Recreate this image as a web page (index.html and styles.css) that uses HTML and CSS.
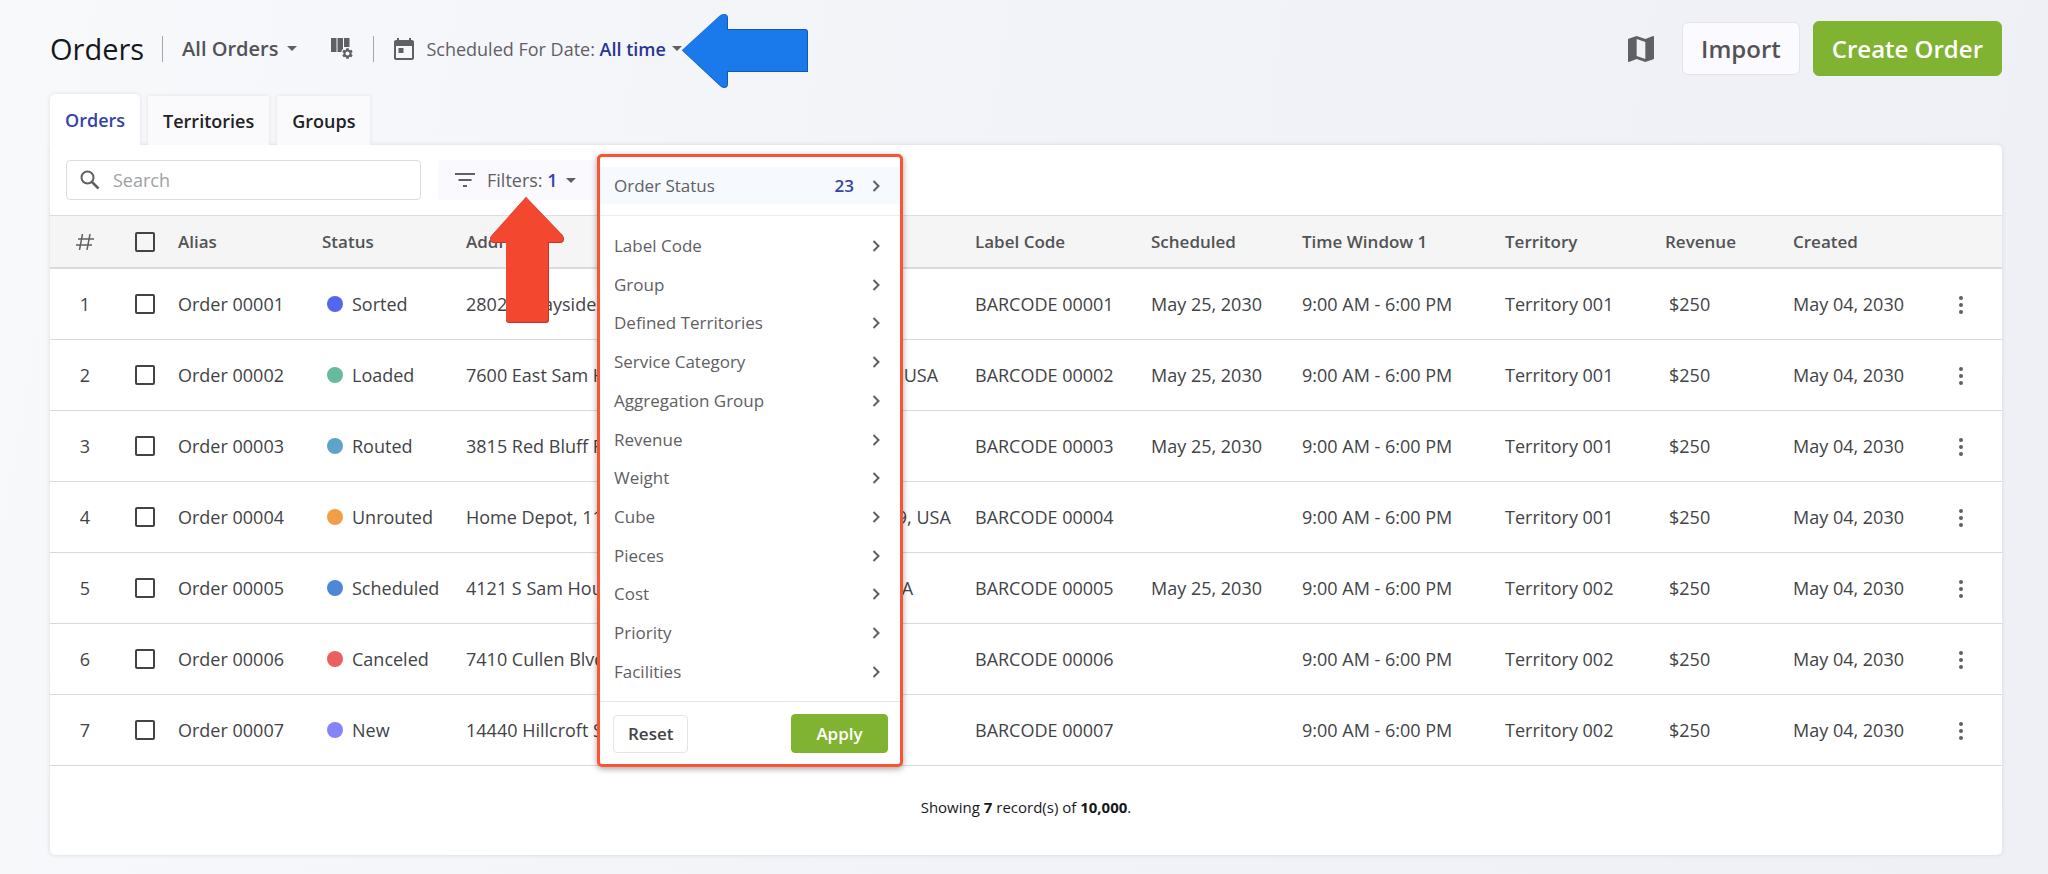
FILE: index.html
```
<!DOCTYPE html>
<html lang="en">
<head>
    <meta charset="UTF-8">
    <meta name="viewport" content="width=device-width, initial-scale=1.0">
    <title>Orders</title>
    <link rel="stylesheet" href="styles.css">
</head>
<body>
    <svg class="sprite" aria-hidden="true">
        <symbol id="chevron" viewBox="0 0 8 12"><path d="M1.5 1l5 5-5 5" fill="none" stroke="currentColor" stroke-width="2"/></symbol>
        <symbol id="caret" viewBox="0 0 10 5"><path d="M0 0h10L5 5z" fill="currentColor"/></symbol>
        <symbol id="dots" viewBox="0 0 4 18"><circle cx="2" cy="2" r="2"/><circle cx="2" cy="9" r="2"/><circle cx="2" cy="16" r="2"/></symbol>
    </svg>

    <header class="header">
        <h1>Orders</h1>
        <span class="divider"></span>
        <button class="view-btn">All Orders <svg class="caret"><use href="#caret"/></svg></button>
        <button class="columns-btn" aria-label="Configure columns">
            <svg width="22" height="21" viewBox="0 0 22 21" fill="#5f6063">
                <path d="M0 0h5.500v14H0zM6.500 0H12v11l-1.500 1.500V14h-4zM13 0h5.500v9H13z"/>
                <svg x="11" y="10" width="11" height="11" viewBox="2 2 20 20">
                    <path d="M19.140 12.940c.04-.3.06-.61.06-.94 0-.32-.02-.64-.07-.94l2.030-1.580c.18-.14.23-.41.12-.61l-1.920-3.320c-.12-.22-.37-.29-.59-.22l-2.390.96c-.5-.38-1.030-.7-1.620-.94l-.36-2.540c-.04-.24-.24-.41-.48-.41h-3.840c-.24 0-.43.17-.47.41l-.36 2.540c-.59.24-1.130.57-1.620.94l-2.390-.96c-.22-.08-.47 0-.59.22L2.740 8.870c-.12.21-.08.47.12.61l2.030 1.580c-.05.3-.09.63-.09.94s.02.64.07.94l-2.030 1.580c-.18.14-.23.41-.12.61l1.920 3.320c.12.22.37.29.59.22l2.390-.96c.5.38 1.030.7 1.620.94l.36 2.540c.05.24.24.41.48.41h3.840c.24 0 .44-.17.47-.41l.36-2.540c.59-.24 1.130-.56 1.620-.94l2.390.96c.22.08.47 0 .59-.22l1.920-3.320c.12-.22.07-.47-.12-.61l-2.010-1.580zM12 15.600c-1.980 0-3.600-1.620-3.600-3.600s1.620-3.600 3.600-3.600 3.600 1.620 3.600 3.600-1.620 3.600-3.600 3.600z"/>
                </svg>
            </svg>
        </button>
        <span class="divider"></span>
        <div class="date">
            <button class="date-btn">
                <svg width="20" height="22" viewBox="0 0 20 22">
                    <path d="M18 2h-1V0h-2v2H5V0H3v2H2C.9 2 0 2.900 0 4v16c0 1.100.9 2 2 2h16c1.100 0 2-.9 2-2V4c0-1.100-.9-2-2-2zm0 18H2V8h16zM4.500 10h5v5h-5z" fill="#5f6063" fill-rule="evenodd"/>
                </svg>
                <span>Scheduled For Date: <b>All time</b></span>
                <svg class="caret"><use href="#caret"/></svg>
            </button>
            <svg class="arrow arrow-blue" viewBox="0 0 126 74">
                <path d="M0 36.500L38 1.500Q40 0 42 0Q46 0 46 4V15H123Q126 15 126 18V58H46V70Q46 74 42 74Q40 74 38 72z" fill="#1259b5"/>
                <path d="M0 36L38 1.500Q40 0 42 0Q45 0 45 4V16H122Q125 16 125 18V57H45V69Q45 73 42 73Q40 73 38 71z" fill="#1a7aeb"/>
            </svg>
        </div>
        <div class="actions">
            <button class="map-btn" aria-label="Map">
                <svg width="26" height="26" viewBox="3 3 18 18">
                    <path d="M20.500 3l-.16.03L15 5.100 9 3 3.360 4.900c-.21.07-.36.25-.36.48V20.500c0 .28.22.5.5.5l.16-.03L9 18.900l6 2.100 5.640-1.900c.21-.07.36-.25.36-.48V3.500c0-.28-.22-.5-.5-.5zM15 19l-6-2.110V5l6 2.110V19z" fill="#5f6063"/>
                </svg>
            </button>
            <button class="btn import-btn">Import</button>
            <button class="btn btn-green create-btn">Create Order</button>
        </div>
    </header>

    <nav class="tabs">
        <button class="tab active">Orders</button>
        <button class="tab">Territories</button>
        <button class="tab">Groups</button>
    </nav>

    <main class="card">
        <div class="toolbar">
            <label class="search">
                <svg width="20" height="20" viewBox="0 0 20 20">
                    <circle cx="7.500" cy="7.500" r="6" fill="none" stroke="#5f6063" stroke-width="2"/>
                    <path d="M12 12l6.500 6.500" stroke="#5f6063" stroke-width="2.500"/>
                </svg>
                <input type="text" placeholder="Search" aria-label="Search">
            </label>
            <div class="filters">
                <button class="filters-btn">
                    <svg width="20" height="14" viewBox="0 0 20 14"><path d="M0 1h20M3.500 7h13M8 13h4" stroke="#5f6063" stroke-width="2"/></svg>
                    <span>Filters: <b>1</b></span>
                    <svg class="caret"><use href="#caret"/></svg>
                </button>

                <div class="menu">
                    <div class="menu-top">
                        <button class="menu-item selected">Order Status <b>23</b><svg class="chevron"><use href="#chevron"/></svg></button>
                    </div>
                    <div class="menu-list">
                        <button class="menu-item">Label Code <svg class="chevron"><use href="#chevron"/></svg></button>
                        <button class="menu-item">Group <svg class="chevron"><use href="#chevron"/></svg></button>
                        <button class="menu-item">Defined Territories <svg class="chevron"><use href="#chevron"/></svg></button>
                        <button class="menu-item">Service Category <svg class="chevron"><use href="#chevron"/></svg></button>
                        <button class="menu-item">Aggregation Group <svg class="chevron"><use href="#chevron"/></svg></button>
                        <button class="menu-item">Revenue <svg class="chevron"><use href="#chevron"/></svg></button>
                        <button class="menu-item">Weight <svg class="chevron"><use href="#chevron"/></svg></button>
                        <button class="menu-item">Cube <svg class="chevron"><use href="#chevron"/></svg></button>
                        <button class="menu-item">Pieces <svg class="chevron"><use href="#chevron"/></svg></button>
                        <button class="menu-item">Cost <svg class="chevron"><use href="#chevron"/></svg></button>
                        <button class="menu-item">Priority <svg class="chevron"><use href="#chevron"/></svg></button>
                        <button class="menu-item">Facilities <svg class="chevron"><use href="#chevron"/></svg></button>
                    </div>
                    <div class="menu-footer">
                        <button class="btn reset-btn">Reset</button>
                        <button class="btn btn-green apply-btn">Apply</button>
                    </div>
                </div>

                <svg class="arrow arrow-red" viewBox="0 0 74 126">
                    <path d="M36 0L72.500 38Q74 40 74 42Q74 46 70 46H59V123Q59 126 56 126H19Q16 126 16 123V46H4Q0 46 0 42Q0 40 2 38z" fill="#c43524"/>
                    <path d="M36 0L72 38Q73 40 73 42Q73 45 70 45H58V122Q58 125 55 125H19Q16 125 16 122V45H4Q0 45 0 42Q0 40 2 38z" fill="#f44730"/>
                </svg>
            </div>
        </div>

        <table class="orders">
            <colgroup>
                <col class="c-num"><col class="c-check"><col class="c-alias"><col class="c-status"><col class="c-address"><col class="c-label">
                <col class="c-sched"><col class="c-window"><col class="c-terr"><col class="c-rev"><col class="c-created"><col class="c-more">
            </colgroup>
            <thead>
                <tr>
                    <th class="center"><svg width="18" height="16" viewBox="0 0 18 16"><path d="M6.500 0l-3 16M14 0l-3 16M2 5h16M0 11h16" fill="none" stroke="#5f6063" stroke-width="1.500"/></svg></th>
                    <th class="center"><input type="checkbox" aria-label="Select all"></th>
                    <th>Alias</th>
                    <th>Status</th>
                    <th>Address</th>
                    <th>Label Code</th>
                    <th>Scheduled</th>
                    <th>Time Window 1</th>
                    <th>Territory</th>
                    <th>Revenue</th>
                    <th>Created</th>
                    <th></th>
                </tr>
            </thead>
            <tbody>
                <tr>
                    <td class="center">1</td>
                    <td class="center"><input type="checkbox" aria-label="Select Order 00001"></td>
                    <td>Order 00001</td>
                    <td><span class="status sorted">Sorted</span></td>
                    <td>2802 S Wayside Dr, Houston, TX 77023</td>
                    <td>BARCODE 00001</td>
                    <td>May 25, 2030</td>
                    <td>9:00 AM - 6:00 PM</td>
                    <td>Territory 001</td>
                    <td class="money">$250</td>
                    <td>May 04, 2030</td>
                    <td class="center"><button class="more" aria-label="More"><svg width="4" height="18"><use href="#dots"/></svg></button></td>
                </tr>
                <tr>
                    <td class="center">2</td>
                    <td class="center"><input type="checkbox" aria-label="Select Order 00002"></td>
                    <td>Order 00002</td>
                    <td><span class="status loaded">Loaded</span></td>
                    <td>7600 East Sam Houston Pkwy S, Houston, TX 77049, USA</td>
                    <td>BARCODE 00002</td>
                    <td>May 25, 2030</td>
                    <td>9:00 AM - 6:00 PM</td>
                    <td>Territory 001</td>
                    <td class="money">$250</td>
                    <td>May 04, 2030</td>
                    <td class="center"><button class="more" aria-label="More"><svg width="4" height="18"><use href="#dots"/></svg></button></td>
                </tr>
                <tr>
                    <td class="center">3</td>
                    <td class="center"><input type="checkbox" aria-label="Select Order 00003"></td>
                    <td>Order 00003</td>
                    <td><span class="status routed">Routed</span></td>
                    <td>3815 Red Bluff Rd, Pasadena, TX 77503</td>
                    <td>BARCODE 00003</td>
                    <td>May 25, 2030</td>
                    <td>9:00 AM - 6:00 PM</td>
                    <td>Territory 001</td>
                    <td class="money">$250</td>
                    <td>May 04, 2030</td>
                    <td class="center"><button class="more" aria-label="More"><svg width="4" height="18"><use href="#dots"/></svg></button></td>
                </tr>
                <tr>
                    <td class="center">4</td>
                    <td class="center"><input type="checkbox" aria-label="Select Order 00004"></td>
                    <td>Order 00004</td>
                    <td><span class="status unrouted">Unrouted</span></td>
                    <td>Home Depot, 11500 Westheimer, Houston, TX 77029, USA</td>
                    <td>BARCODE 00004</td>
                    <td></td>
                    <td>9:00 AM - 6:00 PM</td>
                    <td>Territory 001</td>
                    <td class="money">$250</td>
                    <td>May 04, 2030</td>
                    <td class="center"><button class="more" aria-label="More"><svg width="4" height="18"><use href="#dots"/></svg></button></td>
                </tr>
                <tr>
                    <td class="center">5</td>
                    <td class="center"><input type="checkbox" aria-label="Select Order 00005"></td>
                    <td>Order 00005</td>
                    <td><span class="status scheduled">Scheduled</span></td>
                    <td>4121 S Sam Houston Pkwy E, Houston, TX 77048, USA</td>
                    <td>BARCODE 00005</td>
                    <td>May 25, 2030</td>
                    <td>9:00 AM - 6:00 PM</td>
                    <td>Territory 002</td>
                    <td class="money">$250</td>
                    <td>May 04, 2030</td>
                    <td class="center"><button class="more" aria-label="More"><svg width="4" height="18"><use href="#dots"/></svg></button></td>
                </tr>
                <tr>
                    <td class="center">6</td>
                    <td class="center"><input type="checkbox" aria-label="Select Order 00006"></td>
                    <td>Order 00006</td>
                    <td><span class="status canceled">Canceled</span></td>
                    <td>7410 Cullen Blvd, Houston, TX 77051</td>
                    <td>BARCODE 00006</td>
                    <td></td>
                    <td>9:00 AM - 6:00 PM</td>
                    <td>Territory 002</td>
                    <td class="money">$250</td>
                    <td>May 04, 2030</td>
                    <td class="center"><button class="more" aria-label="More"><svg width="4" height="18"><use href="#dots"/></svg></button></td>
                </tr>
                <tr>
                    <td class="center">7</td>
                    <td class="center"><input type="checkbox" aria-label="Select Order 00007"></td>
                    <td>Order 00007</td>
                    <td><span class="status new">New</span></td>
                    <td>14440 Hillcroft St, Houston, TX 77085</td>
                    <td>BARCODE 00007</td>
                    <td></td>
                    <td>9:00 AM - 6:00 PM</td>
                    <td>Territory 002</td>
                    <td class="money">$250</td>
                    <td>May 04, 2030</td>
                    <td class="center"><button class="more" aria-label="More"><svg width="4" height="18"><use href="#dots"/></svg></button></td>
                </tr>
            </tbody>
        </table>

        <p class="summary">Showing <b>7</b> record(s) of <b>10,000</b>.</p>
    </main>
</body>
</html>
```
FILE: styles.css
```
* { box-sizing: border-box; }
body { font-family: "Open Sans", sans-serif; font-size: 18px; line-height: 24px; color: #424346; margin: 0; padding: 21px 46px 19px 50px; min-height: 100vh; background: linear-gradient(100deg, #f8f9fb, #f2f3f8 50%, #eef0f5); }
button { font: inherit; color: inherit; background: none; border: 0; padding: 0; white-space: nowrap; cursor: pointer; }
svg { display: block; flex: none; }
.sprite { position: absolute; width: 0; height: 0; }
.caret { width: 10px; height: 5px; color: #5f6063; }
.arrow { position: absolute; z-index: 3; }

.header { display: flex; align-items: center; height: 55px; }
h1 { font-size: 29px; line-height: 40px; font-weight: 400; color: #17181b; margin: 0 18px 0 0; }
.divider { width: 1px; height: 26px; background: #a5a6a9; }
.view-btn { display: flex; align-items: center; gap: 9px; font-size: 20px; font-weight: 600; color: #525356; margin: 0 34px 0 19px; }
.columns-btn { margin-right: 20px; }
.date { position: relative; margin-left: 20px; }
.date-btn { display: flex; align-items: center; gap: 6px; color: #5f6063; }
.date-btn span { margin-left: 6px; }
.date-btn b { font-weight: 600; color: #283593; }
.arrow-blue { left: 100%; top: -23px; width: 126px; height: 74px; }
.actions { display: flex; align-items: center; margin-left: auto; }

.btn { background: #fff; border: 1px solid #e3e4e9; border-radius: 6px; font-weight: 600; }
.btn-green { background: #80b332; border-color: #80b332; color: #fff; }
.map-btn { margin-right: 28px; }
.import-btn { height: 53px; padding: 0 18px; font-size: 24px; color: #525356; background: #fbfbff; margin-right: 13px; }
.create-btn { height: 55px; padding: 0 18px; font-size: 24px; }

.tabs { display: flex; align-items: flex-end; gap: 8px; margin-top: 18px; }
.tab { height: 49px; padding: 0 15px; font-weight: 600; color: #212226; background: #fafafd; box-shadow: 0 0 4px #dfe0e6; clip-path: inset(-4px -4px 0 -4px); }
.tab.active { height: 51px; color: #3443a8; background: #fff; border-radius: 5px 5px 0 0; }

.card { background: #fff; border-radius: 0 5px 5px 5px; box-shadow: 0 0 4px #d5d6dc; }
.toolbar { display: flex; gap: 17px; padding: 15px 16px; }
.search { display: flex; align-items: center; gap: 13px; width: 355px; height: 40px; padding: 0 13px; border: 1px solid #dcdde0; border-radius: 4px; }
.search input { flex: 1; min-width: 0; border: 0; outline: 0; padding: 0; font: inherit; background: none; }
.search input::placeholder { color: #a0a1a4; }
.filters { position: relative; }
.filters-btn { display: flex; align-items: center; width: 170px; height: 40px; padding-left: 17px; border-radius: 4px; color: #5f6063; background: #f9f9fe; }
.filters-btn span { margin: 0 8px 0 12px; }
.filters-btn b, .menu-item b { font-weight: 600; color: #3443a8; }
.arrow-red { left: 52px; top: 37px; width: 74px; height: 126px; }

.menu { position: absolute; z-index: 2; left: 159px; top: -6px; width: 306px; background: #fff; border: 3px solid #fb5433; border-radius: 5px; box-shadow: 0 2px 6px rgba(0, 0, 0, .35); }
.menu-top { padding: 10px 0 11px; border-bottom: 1px solid #ebecef; }
.menu-item { display: flex; align-items: center; width: 100%; height: 38px; padding: 0 20px 0 14px; font-size: 17px; color: #5f6063; }
.menu-item.selected { height: 37px; background: #f6f9fe; }
.menu-item b { margin-left: auto; margin-right: 18px; }
.menu-item .chevron { width: 8px; height: 12px; margin-left: auto; }
.menu-item b + .chevron { margin-left: 0; }
.menu-list { display: flex; flex-direction: column; justify-content: space-between; height: 486px; padding: 11px 0 10px; border-bottom: 1px solid #e3e4e6; }
.menu-footer { display: flex; justify-content: space-between; align-items: center; padding: 12px 12px 11px 13px; }
.reset-btn { height: 38px; padding: 0 14px; font-size: 17px; border-radius: 4px; }
.apply-btn { height: 39px; width: 97px; font-size: 17px; border-radius: 4px; }

.orders { width: 100%; table-layout: fixed; border-collapse: separate; border-spacing: 0; }
.orders th, .orders td { padding: 0 8px; text-align: left; white-space: nowrap; overflow: hidden; }
.orders th { height: 54px; font-size: 17px; font-weight: 600; color: #525356; background: #f5f5f5; border-top: 1px solid #dedede; border-bottom: 2px solid #dadada; }
.orders td { height: 71px; border-bottom: 1px solid #d9d9d9; }
.orders .center { text-align: center; }
.orders .center svg { margin: auto; }
.orders .money { padding-left: 12px; }
.c-num { width: 70px; }
.c-check { width: 50px; }
.c-alias, .c-status { width: 144px; }
.c-label { width: 176px; }
.c-sched { width: 151px; }
.c-window { width: 203px; }
.c-terr { width: 160px; }
.c-rev { width: 128px; }
.c-created { width: 134px; }
.c-more { width: 83px; }
input[type="checkbox"] { appearance: none; display: block; width: 20px; height: 20px; margin: 0 auto; border: 2px solid #424346; border-radius: 2px; }
.more { padding: 4px 10px; fill: #5f6063; vertical-align: middle; }

.status { display: flex; align-items: center; gap: 9px; margin-left: 5px; }
.status::before { content: ""; width: 16px; height: 16px; border-radius: 50%; background: currentColor; }
.sorted::before { background: #5465f0; }
.loaded::before { background: #67b99f; }
.routed::before { background: #5ea3c9; }
.unrouted::before { background: #f09e47; }
.scheduled::before { background: #4d87d6; }
.canceled::before { background: #ea6060; }
.new::before { background: #8583fa; }

.summary { margin: 0; padding: 29px 0 36px; text-align: center; font-size: 15px; color: #17181b; }
```
